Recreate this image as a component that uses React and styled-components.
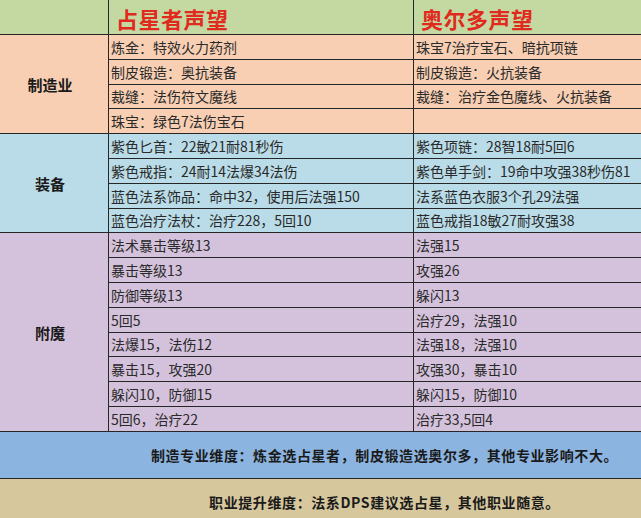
import React from "react";
import styled, { createGlobalStyle } from "styled-components";

const GlobalStyle = createGlobalStyle`
  html, body {
    margin: 0;
    padding: 0;
    width: 641px;
    height: 518px;
    overflow: hidden;
    background: #d6c79d;
  }
  * { box-sizing: border-box; }
`;

const LINE = "1px solid #262626";

const sections = [
  {
    label: "制造业",
    bg: "#f8cfb3",
    rows: [
      ["炼金：特效火力药剂", "珠宝7治疗宝石、暗抗项链"],
      ["制皮锻造：奥抗装备", "制皮锻造：火抗装备"],
      ["裁缝：法伤符文魔线", "裁缝：治疗金色魔线、火抗装备"],
      ["珠宝：绿色7法伤宝石", ""],
    ],
  },
  {
    label: "装备",
    bg: "#b9dce8",
    rows: [
      ["紫色匕首：22敏21耐81秒伤", "紫色项链：28智18耐5回6"],
      ["紫色戒指：24耐14法爆34法伤", "紫色单手剑：19命中攻强38秒伤81"],
      ["蓝色法系饰品：命中32，使用后法强150", "法系蓝色衣服3个孔29法强"],
      ["蓝色治疗法杖：治疗228，5回10", "蓝色戒指18敏27耐攻强38"],
    ],
  },
  {
    label: "附魔",
    bg: "#d4c2dc",
    rows: [
      ["法术暴击等级13", "法强15"],
      ["暴击等级13", "攻强26"],
      ["防御等级13", "躲闪13"],
      ["5回5", "治疗29，法强10"],
      ["法爆15，法伤12", "法强18，法强10"],
      ["暴击15，攻强20", "攻强30，暴击10"],
      ["躲闪10，防御15", "躲闪15，防御10"],
      ["5回6，治疗22", "治疗33,5回4"],
    ],
  },
];

export default function App() {
  return (
    <>
      <GlobalStyle />
      <Page>
        <Table>
          <HeaderCell />
          <HeaderCell>
            <HeaderTitle>占星者声望</HeaderTitle>
          </HeaderCell>
          <HeaderCell $last>
            <HeaderTitle>奥尔多声望</HeaderTitle>
          </HeaderCell>
          {sections.map((s) => (
            <React.Fragment key={s.label}>
              <LabelCell $bg={s.bg} $span={s.rows.length}>
                {s.label}
              </LabelCell>
              {s.rows.map((r, i) => (
                <React.Fragment key={i}>
                  <Cell $bg={s.bg}>{r[0]}</Cell>
                  <Cell $bg={s.bg} $last>
                    {r[1]}
                  </Cell>
                </React.Fragment>
              ))}
            </React.Fragment>
          ))}
        </Table>
        <Banner $bg="#8cb4e0" $height="47px">
          制造专业维度：炼金选占星者，制皮锻造选奥尔多，其他专业影响不大。
        </Banner>
        <Banner $bg="#d6c79d" $height="48px">
          职业提升维度：法系DPS建议选占星，其他职业随意。
        </Banner>
      </Page>
    </>
  );
}

const Page = styled.div`
  width: 641px;
  display: flex;
  flex-direction: column;
  font-family: "Noto Sans CJK SC", "Noto Sans", sans-serif;
`;

const Table = styled.div`
  display: grid;
  grid-template-columns: 109px 305px 1fr;
  grid-template-rows: 35px;
  grid-auto-rows: 24.8px;
`;

const HeaderCell = styled.div`
  background: #c4d9a1;
  border-bottom: ${LINE};
  border-right: ${(p) => (p.$last ? "none" : LINE)};
  display: flex;
  align-items: center;
  padding-left: 7px;
  padding-top: 1px;
`;

const HeaderTitle = styled.span`
  color: #e02a1e;
  font-size: 22px;
  font-weight: 700;
  letter-spacing: 0.5px;
  line-height: 1;
`;

const LabelCell = styled.div`
  grid-row: span ${(p) => p.$span};
  background: ${(p) => p.$bg};
  border-right: ${LINE};
  border-bottom: ${LINE};
  display: flex;
  align-items: center;
  justify-content: center;
  padding-right: 8px;
  font-size: 15px;
  font-weight: 700;
  color: #1a1a1a;
`;

const Cell = styled.div`
  background: ${(p) => p.$bg};
  border-right: ${(p) => (p.$last ? "none" : LINE)};
  border-bottom: ${LINE};
  display: flex;
  align-items: center;
  padding-left: 2px;
  font-size: 14px;
  color: #2a2a2a;
  white-space: nowrap;
  overflow: hidden;
`;

const Banner = styled.div`
  background: ${(p) => p.$bg};
  height: ${(p) => p.$height};
  border-bottom: ${LINE};
  display: flex;
  align-items: center;
  justify-content: center;
  padding-left: 128px;
  font-size: 14px;
  font-weight: 700;
  letter-spacing: 0.6px;
  color: #1a1a1a;
  white-space: nowrap;
`;
